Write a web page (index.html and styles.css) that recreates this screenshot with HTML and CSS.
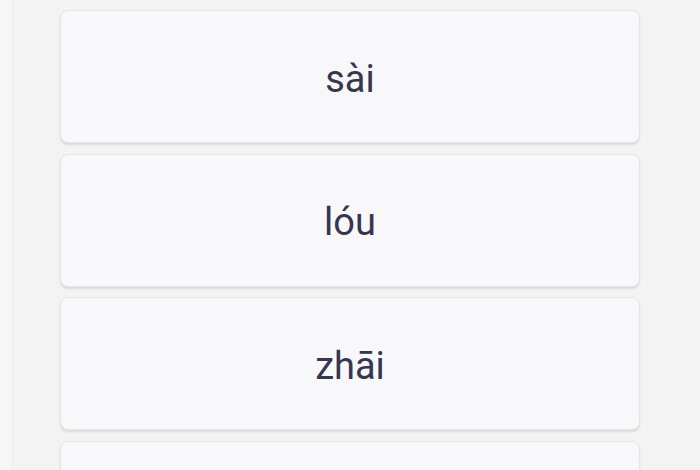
FILE: index.html
```html
<!DOCTYPE html>
<html lang="zh">
<head>
<meta charset="utf-8">
<title>Pinyin options</title>
<link rel="stylesheet" href="styles.css">
</head>
<body>
<div class="page">
  <div class="options">
    <div class="option"><span class="label">sài</span></div>
    <div class="option"><span class="label">lóu</span></div>
    <div class="option"><span class="label">zhāi</span></div>
    <div class="option"><span class="label">&nbsp;</span></div>
  </div>
</div>
</body>
</html>
```
FILE: styles.css
```css
html, body {
  margin: 0;
  padding: 0;
  background: #f3f3f3;
}
body {
  font-family: Roboto, "Noto Sans", "Liberation Sans", sans-serif;
  height: 470px;
  overflow: hidden;
}
.page {
  border-left: 12px solid #f6f6f6;
  box-shadow: inset 1px 0 0 #ececec;
  height: 100%;
}
.options {
  display: flex;
  flex-direction: column;
  gap: 10.7px;
  padding: 10px 0 0 48px;
  width: 580px;
}
.option {
  box-sizing: border-box;
  height: 133px;
  padding-top: 4px;
  background: #f8f8fa;
  border: 1px solid #e6e6e8;
  border-radius: 8px;
  box-shadow: 0 2px 2px rgba(0, 0, 0, 0.10);
  display: flex;
  align-items: center;
  justify-content: center;
  flex-shrink: 0;
}
.label {
  font-size: 38px;
  color: #363650;
  line-height: 1;
}
```
